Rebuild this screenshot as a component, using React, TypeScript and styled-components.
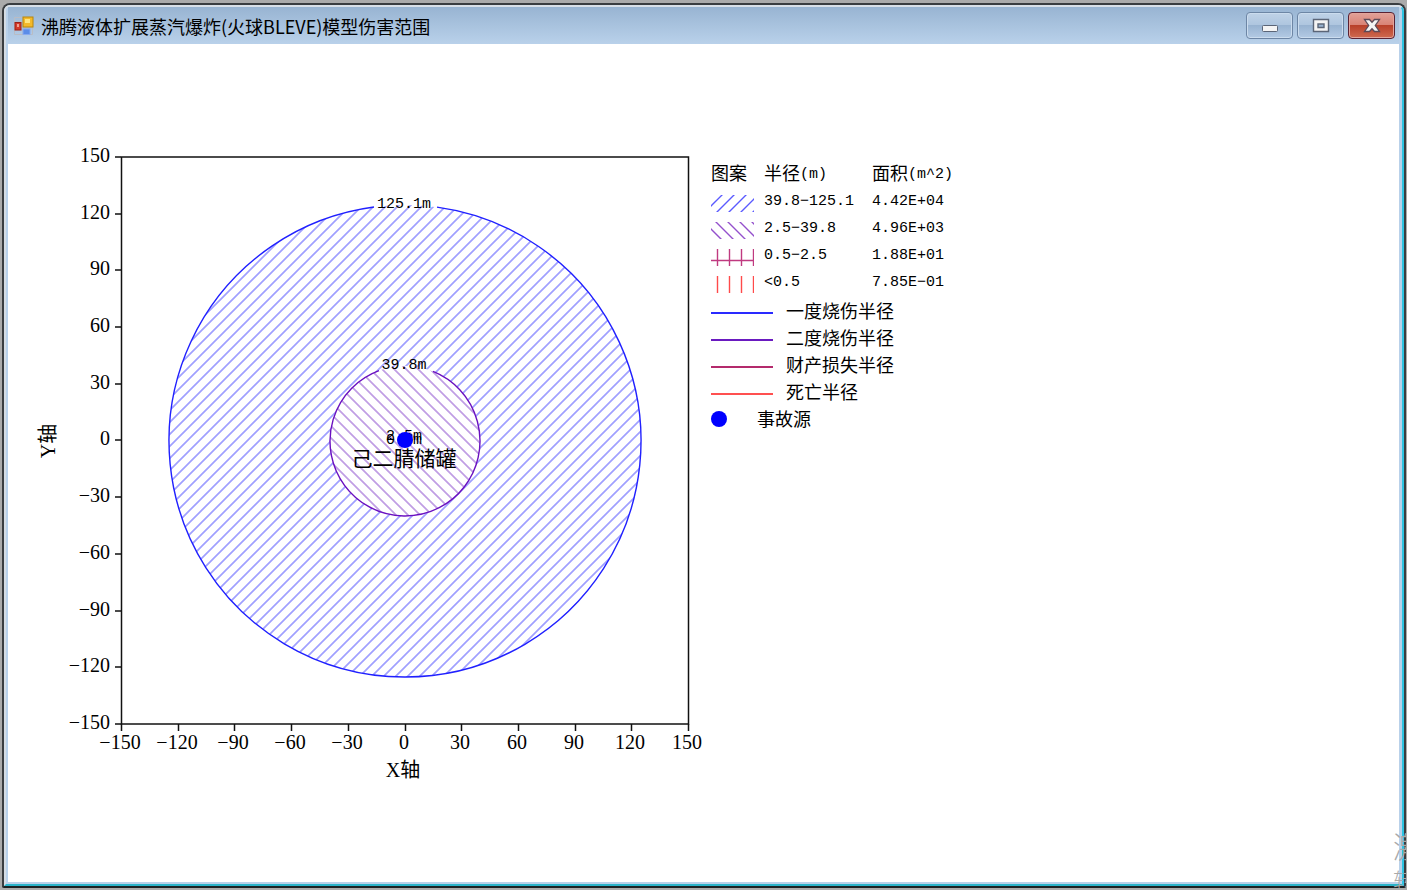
import React from "react";
import styled, { createGlobalStyle } from "styled-components";

const CJK = '"Noto Sans CJK SC", sans-serif';
const MONO = '"Liberation Mono", "Noto Sans CJK SC", monospace';
const SERIF = '"Liberation Serif", "Noto Sans CJK SC", serif';

const GlobalStyle = createGlobalStyle`
  *, *::before, *::after { box-sizing: border-box; }
  body { margin: 0; background: #ababab; overflow: hidden; }
`;

const Desktop = styled.div`
  display: flex;
  position: relative;
  min-height: 100vh;
  padding: 3px 1px 2px 2px;
  background: #ababab;
  color: #000;
  font-family: ${CJK};
  overflow: hidden;
`;

const Frame = styled.section`
  display: flex;
  flex: 1;
  border: 2px solid #3a3d40;
  border-bottom-color: #1b2224;
  border-radius: 8px 8px 2px 2px;
  background: #dfe8f1;
`;

const Inner = styled.div`
  display: flex;
  flex: 1;
  flex-direction: column;
  padding: 0 3px 2px 2px;
  border: 2px solid;
  border-color: #d9e0e8 #2cc4e2 #29b3c9 #d5dce3;
  border-radius: 6px 6px 0 0;
  background: #b9d1ea;
`;

const TitleBar = styled.header`
  display: flex;
  align-items: center;
  gap: 7px;
  height: 37px;
  padding: 0 4px 0 6px;
  background: linear-gradient(#98b4d2, #b9d1ea);
`;

const Title = styled.h1`
  flex: 1;
  margin: 0;
  font-size: 18px;
  font-weight: 400;
  line-height: 36px;
`;

const Controls = styled.div`
  display: flex;
  gap: 4px;
`;

const ControlButton = styled.button<{ $danger?: boolean }>`
  display: grid;
  place-items: center;
  width: 47px;
  height: 27px;
  padding: 0;
  border: 1px solid ${(p) => (p.$danger ? "#5a2233" : "#6d86a5")};
  border-radius: 4px;
  box-shadow: inset 0 0 0 1px ${(p) => (p.$danger ? "#e3a59c" : "#cbdcee")};
  background: ${(p) =>
    p.$danger
      ? "linear-gradient(#e2a198 0%, #d98477 46%, #b8402a 50%, #cf6a50 100%)"
      : "linear-gradient(#bfd2e7 0%, #afc6df 46%, #98b3d1 50%, #b3cae4 100%)"};
`;

const Content = styled.main`
  display: flex;
  flex: 1;
  gap: 8px;
  align-items: flex-start;
  padding: 96px 22px 0;
  background: #fff;
`;

const Chart = styled.svg`
  flex: none;
  width: 673px;
  height: 650px;
`;

const AxisText = styled.text`
  font-family: ${SERIF};
  font-size: 20px;
`;

const RadiusText = styled.text`
  font-family: ${MONO};
  font-size: 15px;
`;

const SourceText = styled.text`
  font-family: ${CJK};
  font-size: 21px;
`;

const Legend = styled.aside`
  padding-top: 18px;
  font-size: 18px;
`;

const LegendTable = styled.table`
  border-collapse: collapse;
  table-layout: fixed;
  width: 261px;
`;

const HeadCell = styled.th<{ $width: number }>`
  width: ${(p) => p.$width}px;
  height: 28px;
  padding: 0;
  font-weight: 400;
  line-height: 28px;
  text-align: left;
  vertical-align: top;
  white-space: nowrap;
`;

const Cell = styled.td`
  height: 27px;
  padding: 5px 0 0;
  font-family: ${MONO};
  font-size: 15px;
  line-height: 22px;
  vertical-align: top;
  white-space: nowrap;
`;

const Unit = styled.span`
  font-family: ${MONO};
  font-size: 15px;
  line-height: 1;
  vertical-align: 2px;
`;

const Swatch = styled.svg`
  display: block;
  width: 43px;
  height: 17px;
  margin-top: 4px;
`;

const LineList = styled.ul`
  margin: 0;
  padding: 3px 0 0;
  list-style: none;
`;

const LineItem = styled.li<{ $gap: number }>`
  display: flex;
  align-items: center;
  gap: ${(p) => p.$gap}px;
  height: 27px;
  line-height: 27px;
`;

const Stroke = styled.span<{ $color: string }>`
  width: 62px;
  height: 6px;
  border-bottom: 2px solid ${(p) => p.$color};
`;

const Dot = styled.span`
  width: 16px;
  height: 16px;
  border-radius: 50%;
  background: #00f;
`;

const Watermark = styled.div`
  position: absolute;
  right: -16px;
  bottom: -6px;
  width: 30px;
  color: #a9a9a9;
  font-weight: 300;
  pointer-events: none;
`;

const WatermarkLine = styled.div<{ $size: number }>`
  font-size: ${(p) => p.$size}px;
  line-height: 34px;
`;

const AppIcon = () => (
  <svg width="20" height="20" viewBox="0 0 20 20" aria-hidden="true">
    <path d="M0.5 1.5h18v17H0.5zM9 1.5v17M0.5 6h8M0.5 14h8M9 12h10" fill="none" stroke="#b9bcc4" />
    <rect x="9" y="1" width="10" height="10" fill="#f3b92a" stroke="#b8860b" />
    <rect x="11" y="3" width="5" height="4" fill="#ffe680" />
    <rect x="1" y="6.5" width="6" height="7.5" fill="#d43a2a" stroke="#9c2016" />
    <rect x="3" y="8" width="2" height="3" fill="#f0a090" />
    <rect x="9" y="13" width="7" height="5.5" fill="#5b8de8" stroke="#86aaf0" />
  </svg>
);

// Plot geometry: -150..150 m over 567 px on both axes.
const LEFT = 91;
const TOP = 17;
const SIZE = 567;
const CX = 375;
const CY = 301;
const TICKS = [-150, -120, -90, -60, -30, 0, 30, 60, 90, 120, 150];
const offset = (v: number) => Math.round(((v + 150) / 300) * SIZE);
const label = (v: number) => (v < 0 ? `−${-v}` : `${v}`);

// Arc that leaves a gap at the top, where the radius label sits.
const openCircle = (r: number, x1: number, x2: number) => {
  const y = (x: number) => CY - Math.sqrt(r * r - (x - CX) * (x - CX));
  return `M${x2} ${y(x2)}A${r} ${r} 0 1 1 ${x1} ${y(x1)}`;
};

const DamageChart = () => (
  <Chart viewBox="0 0 673 650" role="img" aria-label="伤害范围">
    <defs>
      <pattern id="outer" width="12" height="12" patternUnits="userSpaceOnUse" patternTransform="translate(2 0)">
        <path d="M-2 14L14 -2M-2 2L2 -2M10 14L14 10" stroke="#a0a0ff" strokeWidth="1.7" />
      </pattern>
      <pattern id="inner" width="12" height="12" patternUnits="userSpaceOnUse" patternTransform="translate(3 0)">
        <path d="M-2 -2L14 14M-2 10L2 14M10 -2L14 2" stroke="#c09ee4" strokeWidth="1.7" />
      </pattern>
    </defs>
    <circle cx={CX} cy={CY} r="236" fill="url(#outer)" />
    <path d={openCircle(236, 344, 407)} fill="none" stroke="#2020ff" strokeWidth="1.4" />
    <circle cx={CX} cy={CY} r="75" fill="#fff" />
    <circle cx={CX} cy={CY} r="75" fill="url(#inner)" />
    <path d={openCircle(75, 349, 403)} fill="none" stroke="#6a10c0" strokeWidth="1.4" />
    <rect x={LEFT + 0.5} y={TOP} width={SIZE} height={SIZE} fill="none" stroke="#111" strokeWidth="1.5" />
    {TICKS.map((v) => (
      <g key={v}>
        <path
          d={`M${LEFT - 6} ${TOP + SIZE - offset(v)}h6M${LEFT + 0.5 + offset(v)} ${TOP + SIZE}v7`}
          stroke="#111"
          strokeWidth="1.5"
        />
        <AxisText x={LEFT - 11} y={TOP + SIZE - offset(v) + 5} textAnchor="end">
          {label(v)}
        </AxisText>
        <AxisText x={LEFT - 1 + offset(v)} y={609} textAnchor="middle">
          {label(v)}
        </AxisText>
      </g>
    ))}
    <AxisText x="373" y="637" textAnchor="middle">X轴</AxisText>
    <AxisText transform="translate(25 301) rotate(-90)" textAnchor="middle">Y轴</AxisText>
    <RadiusText x="374" y="68" textAnchor="middle">125.1m</RadiusText>
    <RadiusText x="374" y="229" textAnchor="middle">39.8m</RadiusText>
    <RadiusText x="374" y="300" textAnchor="middle">2.5m</RadiusText>
    <RadiusText x="374" y="304" textAnchor="middle">0.5m</RadiusText>
    <circle cx="375" cy="300" r="8" fill="#00f" />
    <SourceText x="374" y="326" textAnchor="middle">己二腈储罐</SourceText>
  </Chart>
);

const ZONES = [
  { radius: "39.8−125.1", area: "4.42E+04", color: "#5a5aff", d: "M-4 15L13 -2M4 19L25 -2M16 19L37 -2M28 19L49 -2M40 19L46 13" },
  { radius: "2.5−39.8", area: "4.96E+03", color: "#9450cc", d: "M-6 1L12 19M3 -2L24 19M15 -2L36 19M27 -2L48 19M39 -2L46 5" },
  { radius: "0.5−2.5", area: "1.88E+01", color: "#c03a80", d: "M6.5 0V17M18.5 0V17M30.5 0V17M42.5 0V17M0 11.5H43" },
  { radius: "<0.5", area: "7.85E−01", color: "#ff4a4a", d: "M6.5 0V17M18.5 0V17M30.5 0V17M42.5 0V17" },
];

const LINES = [
  { name: "一度烧伤半径", color: "#2a2aff" },
  { name: "二度烧伤半径", color: "#6a1ac0" },
  { name: "财产损失半径", color: "#b42a6c" },
  { name: "死亡半径", color: "#ff5050" },
];

export default function App() {
  return (
    <Desktop>
      <GlobalStyle />
      <Frame>
        <Inner>
          <TitleBar>
            <AppIcon />
            <Title>沸腾液体扩展蒸汽爆炸(火球BLEVE)模型伤害范围</Title>
            <Controls>
              <ControlButton type="button" aria-label="最小化">
                <svg width="18" height="16" viewBox="0 0 18 16">
                  <rect x="1.5" y="7.5" width="15" height="6" rx="1" fill="#f4f4f4" stroke="#5b6577" />
                </svg>
              </ControlButton>
              <ControlButton type="button" aria-label="最大化">
                <svg width="18" height="16" viewBox="0 0 18 16">
                  <path
                    d="M1.5 1.5h15v12h-15zM6 6v3.5h6V6z"
                    fill="#f4f4f4"
                    fillRule="evenodd"
                    stroke="#5b6577"
                    strokeWidth="1.4"
                  />
                </svg>
              </ControlButton>
              <ControlButton type="button" aria-label="关闭" $danger>
                <svg width="18" height="16" viewBox="0 0 18 16">
                  <path
                    d="M1.5 1.5h5L9 4.3l2.5-2.8h5L12.3 7.5l4.2 6h-5L9 10.7l-2.5 2.8h-5l4.2-6z"
                    fill="#f4f4f4"
                    stroke="#5c4a58"
                    strokeWidth="1.3"
                  />
                </svg>
              </ControlButton>
            </Controls>
          </TitleBar>
          <Content>
            <DamageChart />
            <Legend>
              <LegendTable>
                <thead>
                  <tr>
                    <HeadCell $width={53}>图案</HeadCell>
                    <HeadCell $width={108}>半径<Unit>(m)</Unit></HeadCell>
                    <HeadCell $width={100}>面积<Unit>(m^2)</Unit></HeadCell>
                  </tr>
                </thead>
                <tbody>
                  {ZONES.map((z) => (
                    <tr key={z.radius}>
                      <Cell>
                        <Swatch viewBox="0 0 43 17" aria-hidden="true">
                          <path d={z.d} fill="none" stroke={z.color} strokeWidth="1.4" />
                        </Swatch>
                      </Cell>
                      <Cell>{z.radius}</Cell>
                      <Cell>{z.area}</Cell>
                    </tr>
                  ))}
                </tbody>
              </LegendTable>
              <LineList>
                {LINES.map((l) => (
                  <LineItem key={l.name} $gap={13}>
                    <Stroke $color={l.color} />
                    {l.name}
                  </LineItem>
                ))}
                <LineItem $gap={30}>
                  <Dot />
                  事故源
                </LineItem>
              </LineList>
            </Legend>
          </Content>
        </Inner>
      </Frame>
      <Watermark>
        <WatermarkLine $size={30}>激</WatermarkLine>
        <WatermarkLine $size={22}>转</WatermarkLine>
      </Watermark>
    </Desktop>
  );
}
